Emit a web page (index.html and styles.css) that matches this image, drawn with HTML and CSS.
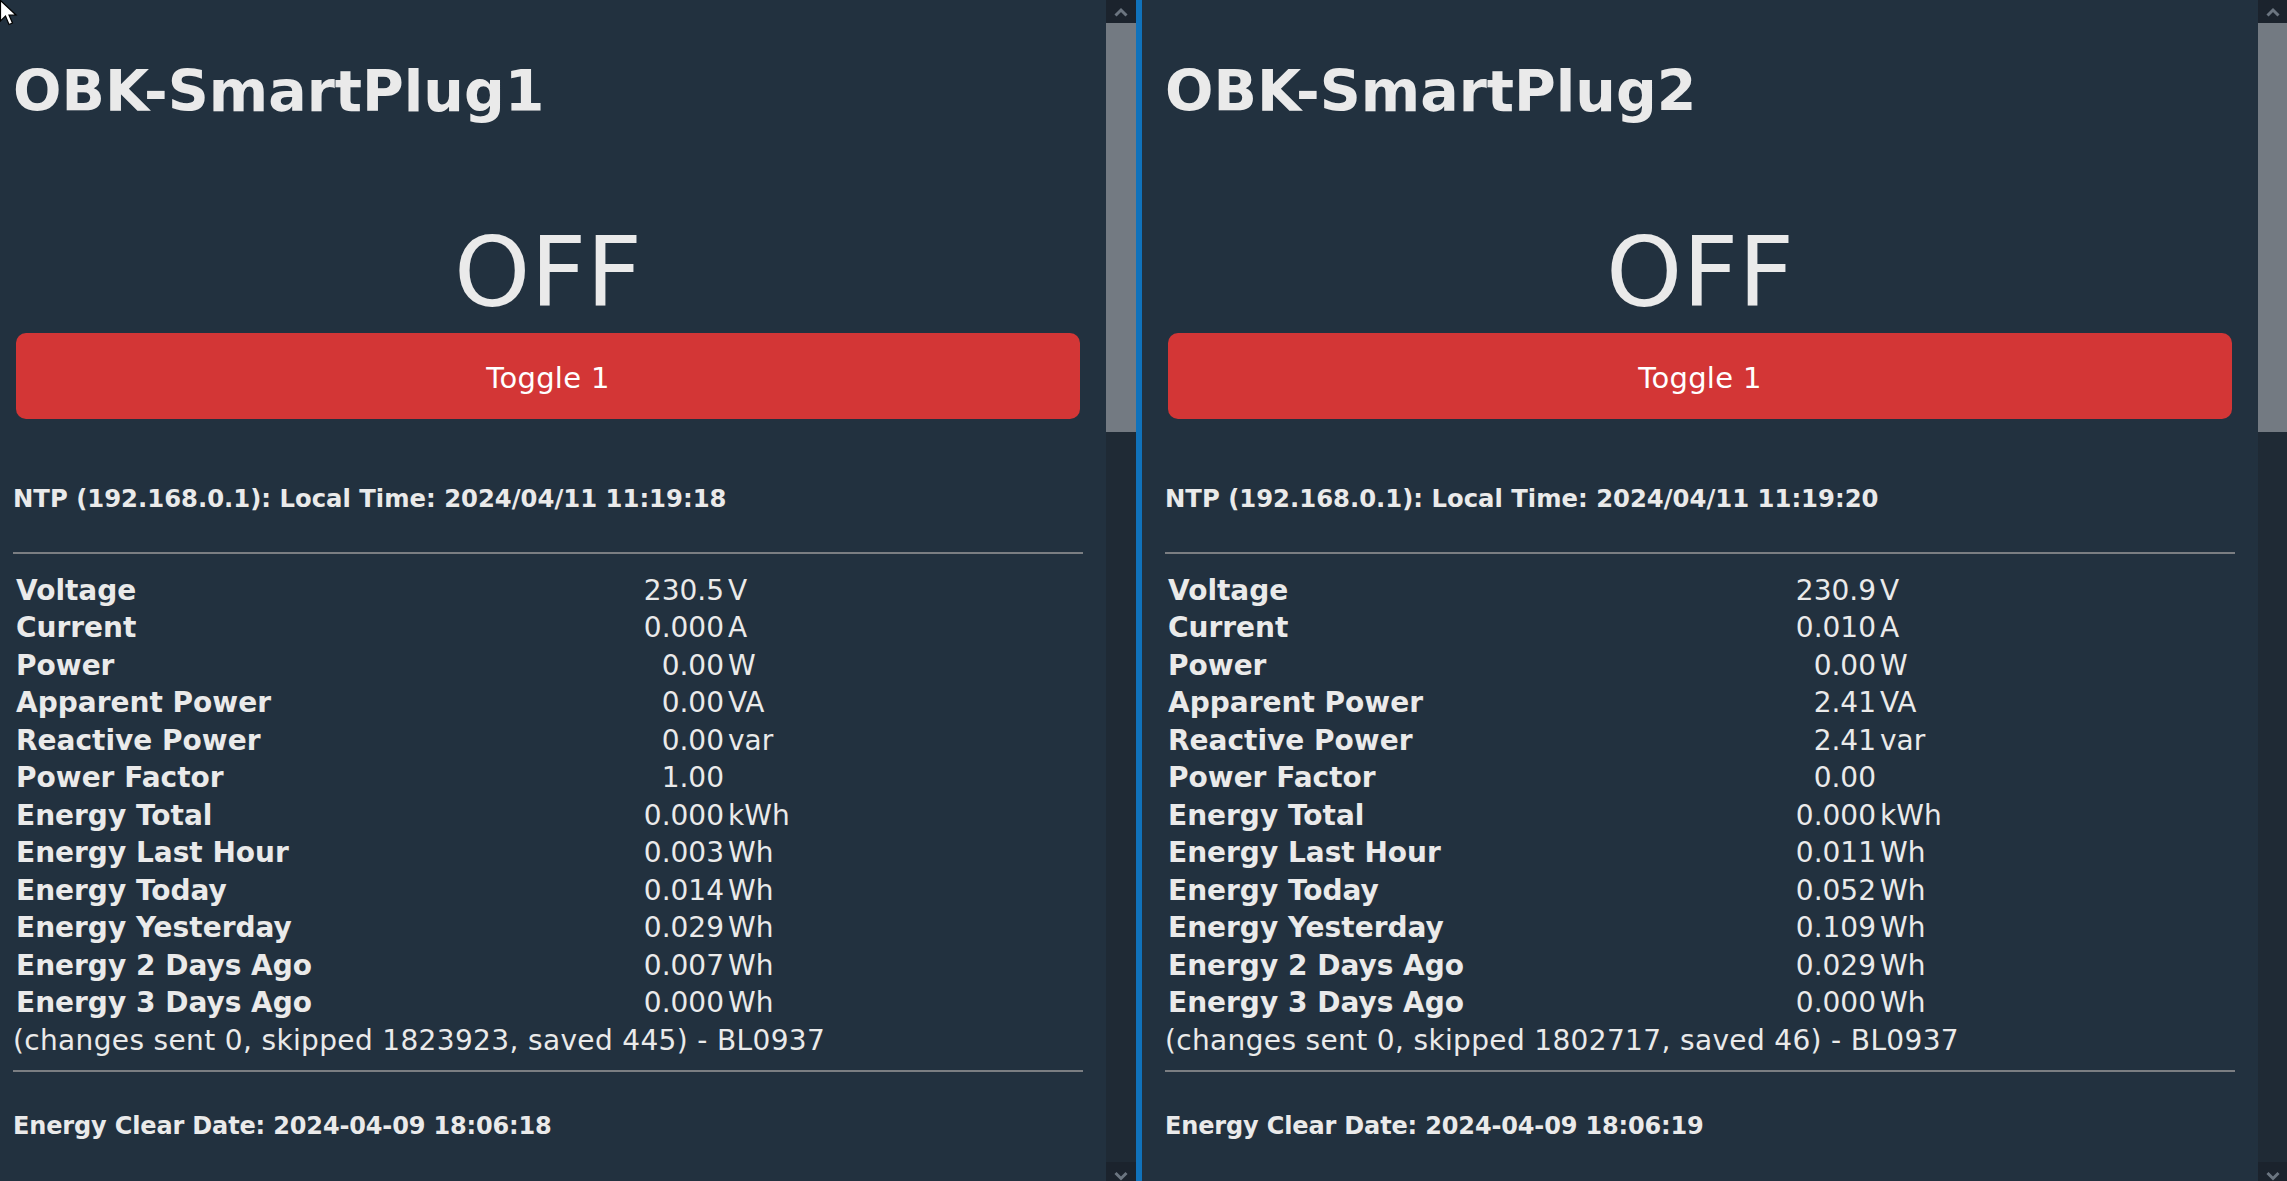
FILE: index.html
```html
<!DOCTYPE html>
<html lang="en">
<head>
<meta charset="utf-8">
<title>OBK SmartPlugs</title>
<link rel="stylesheet" href="styles.css">
</head>
<body>
<div class="screen">
  <section class="pane pane-left">
    <div class="content">
      <h1 class="title">OBK-SmartPlug1</h1>
      <div class="state">OFF</div>
      <button class="toggle">Toggle 1</button>
      <div class="info ntp">NTP (192.168.0.1): Local Time: 2024/04/11 11:19:18</div>
      <hr class="rule rule-top">
      <div class="readings">
        <div class="row"><b>Voltage</b><span class="val">230.5</span><span class="unit">V</span></div>
        <div class="row"><b>Current</b><span class="val">0.000</span><span class="unit">A</span></div>
        <div class="row"><b>Power</b><span class="val">0.00</span><span class="unit">W</span></div>
        <div class="row"><b>Apparent Power</b><span class="val">0.00</span><span class="unit">VA</span></div>
        <div class="row"><b>Reactive Power</b><span class="val">0.00</span><span class="unit">var</span></div>
        <div class="row"><b>Power Factor</b><span class="val">1.00</span><span class="unit"></span></div>
        <div class="row"><b>Energy Total</b><span class="val">0.000</span><span class="unit">kWh</span></div>
        <div class="row"><b>Energy Last Hour</b><span class="val">0.003</span><span class="unit">Wh</span></div>
        <div class="row"><b>Energy Today</b><span class="val">0.014</span><span class="unit">Wh</span></div>
        <div class="row"><b>Energy Yesterday</b><span class="val">0.029</span><span class="unit">Wh</span></div>
        <div class="row"><b>Energy 2 Days Ago</b><span class="val">0.007</span><span class="unit">Wh</span></div>
        <div class="row"><b>Energy 3 Days Ago</b><span class="val">0.000</span><span class="unit">Wh</span></div>
      </div>
      <div class="changes">(changes sent 0, skipped 1823923, saved 445) - BL0937</div>
      <hr class="rule rule-bottom">
      <div class="info clear">Energy Clear Date: 2024-04-09 18:06:18</div>
    </div>
    <div class="scrollbar">
      <div class="sb-btn sb-up"><svg width="14" height="10" viewBox="0 0 14 10"><polyline points="1.5,8.5 7,3 12.5,8.5" fill="none" stroke="#6b7580" stroke-width="3"/></svg></div>
      <div class="sb-thumb"></div>
      <div class="sb-track"></div>
      <div class="sb-btn sb-down"><svg width="14" height="10" viewBox="0 0 14 10"><polyline points="1.5,2 7,7.5 12.5,2" fill="none" stroke="#6b7580" stroke-width="3"/></svg></div>
    </div>
  </section>
  <div class="divider"></div>
  <section class="pane pane-right">
    <div class="content">
      <h1 class="title">OBK-SmartPlug2</h1>
      <div class="state">OFF</div>
      <button class="toggle">Toggle 1</button>
      <div class="info ntp">NTP (192.168.0.1): Local Time: 2024/04/11 11:19:20</div>
      <hr class="rule rule-top">
      <div class="readings">
        <div class="row"><b>Voltage</b><span class="val">230.9</span><span class="unit">V</span></div>
        <div class="row"><b>Current</b><span class="val">0.010</span><span class="unit">A</span></div>
        <div class="row"><b>Power</b><span class="val">0.00</span><span class="unit">W</span></div>
        <div class="row"><b>Apparent Power</b><span class="val">2.41</span><span class="unit">VA</span></div>
        <div class="row"><b>Reactive Power</b><span class="val">2.41</span><span class="unit">var</span></div>
        <div class="row"><b>Power Factor</b><span class="val">0.00</span><span class="unit"></span></div>
        <div class="row"><b>Energy Total</b><span class="val">0.000</span><span class="unit">kWh</span></div>
        <div class="row"><b>Energy Last Hour</b><span class="val">0.011</span><span class="unit">Wh</span></div>
        <div class="row"><b>Energy Today</b><span class="val">0.052</span><span class="unit">Wh</span></div>
        <div class="row"><b>Energy Yesterday</b><span class="val">0.109</span><span class="unit">Wh</span></div>
        <div class="row"><b>Energy 2 Days Ago</b><span class="val">0.029</span><span class="unit">Wh</span></div>
        <div class="row"><b>Energy 3 Days Ago</b><span class="val">0.000</span><span class="unit">Wh</span></div>
      </div>
      <div class="changes">(changes sent 0, skipped 1802717, saved 46) - BL0937</div>
      <hr class="rule rule-bottom">
      <div class="info clear">Energy Clear Date: 2024-04-09 18:06:19</div>
    </div>
    <div class="scrollbar">
      <div class="sb-btn sb-up"><svg width="14" height="10" viewBox="0 0 14 10"><polyline points="1.5,8.5 7,3 12.5,8.5" fill="none" stroke="#6b7580" stroke-width="3"/></svg></div>
      <div class="sb-thumb"></div>
      <div class="sb-track"></div>
      <div class="sb-btn sb-down"><svg width="14" height="10" viewBox="0 0 14 10"><polyline points="1.5,2 7,7.5 12.5,2" fill="none" stroke="#6b7580" stroke-width="3"/></svg></div>
    </div>
  </section>
</div>
<svg class="cursor" width="18" height="27" viewBox="0 0 18 27"><path d="M0.5 0.5 L0.5 21 L5.5 16 L9 24.5 L12.5 23 L9 15 L16 15 Z" fill="#fff" stroke="#000" stroke-width="1.2" stroke-linejoin="miter"/></svg>
</body>
</html>
```
FILE: styles.css
```css
html, body {
  margin: 0;
  padding: 0;
}

body {
  background: #22313f;
  color: #eaeaea;
  font-family: "DejaVu Sans", Verdana, sans-serif;
  font-size: 28px;
  overflow: hidden;
}

.screen {
  display: flex;
  height: 1181px;
  overflow: hidden;
}

.pane {
  display: flex;
  height: 1181px;
  background: #22313f;
  flex: none;
}

.pane-left {
  width: 1136px;
}

.pane-right {
  width: 1145px;
}

.content {
  flex: 1;
  min-width: 0;
  padding: 0 23px;
}

.pane-left .content {
  padding-left: 13px;
}

.title {
  margin: 57.8px 0 0;
  font-size: 57px;
  line-height: 66px;
  font-weight: bold;
  color: #eaeaea;
}

.state {
  margin-top: 94.7px;
  text-align: center;
  font-size: 97px;
  line-height: 110px;
}

.toggle {
  display: block;
  box-sizing: border-box;
  width: calc(100% - 6px);
  height: 86px;
  margin: 4.5px 3px 0;
  padding: 5px 0 0;
  border: 0;
  border-radius: 10px;
  background: #d33636;
  color: #ffffff;
  font-family: "DejaVu Sans", Verdana, sans-serif;
  font-size: 29px;
  letter-spacing: 0.3px;
  line-height: 32px;
}

.info {
  font-size: 24px;
  font-weight: bold;
  line-height: 28px;
}

.ntp {
  margin-top: 66.2px;
  font-size: 24.3px;
}

.rule {
  height: 2px;
  border: 0;
  background: #7b7e82;
  margin: 0;
}

.rule-top {
  margin-top: 38.8px;
}

.readings {
  margin-top: 17.6px;
  padding-left: 3px;
}

.row {
  display: grid;
  grid-template-columns: 620px 84px 1fr;
  column-gap: 4px;
  height: 37.5px;
  line-height: 37.5px;
  white-space: nowrap;
}

.row b {
  font-weight: bold;
}

.val {
  text-align: right;
}

.changes {
  height: 37.5px;
  line-height: 37.5px;
  letter-spacing: 0.35px;
  white-space: nowrap;
}

.rule-bottom {
  margin-top: 10.9px;
}

.clear {
  margin-top: 39.7px;
  letter-spacing: -0.15px;
}

.scrollbar {
  flex: none;
  width: 30px;
  display: flex;
  flex-direction: column;
  background: #1f2a35;
}

.pane-right .scrollbar {
  width: 29px;
}

.sb-btn {
  flex: none;
  display: flex;
  justify-content: center;
  background: #1b232d;
}

.sb-up {
  height: 23px;
  align-items: center;
}

.sb-down {
  height: 19px;
  align-items: flex-end;
}

.sb-thumb {
  flex: none;
  height: 409px;
  background: #737a82;
}

.sb-track {
  flex: 1;
}

.divider {
  flex: none;
  width: 6px;
  background: #1072bb;
}

.cursor {
  position: absolute;
  left: 0;
  top: 0;
}
```
